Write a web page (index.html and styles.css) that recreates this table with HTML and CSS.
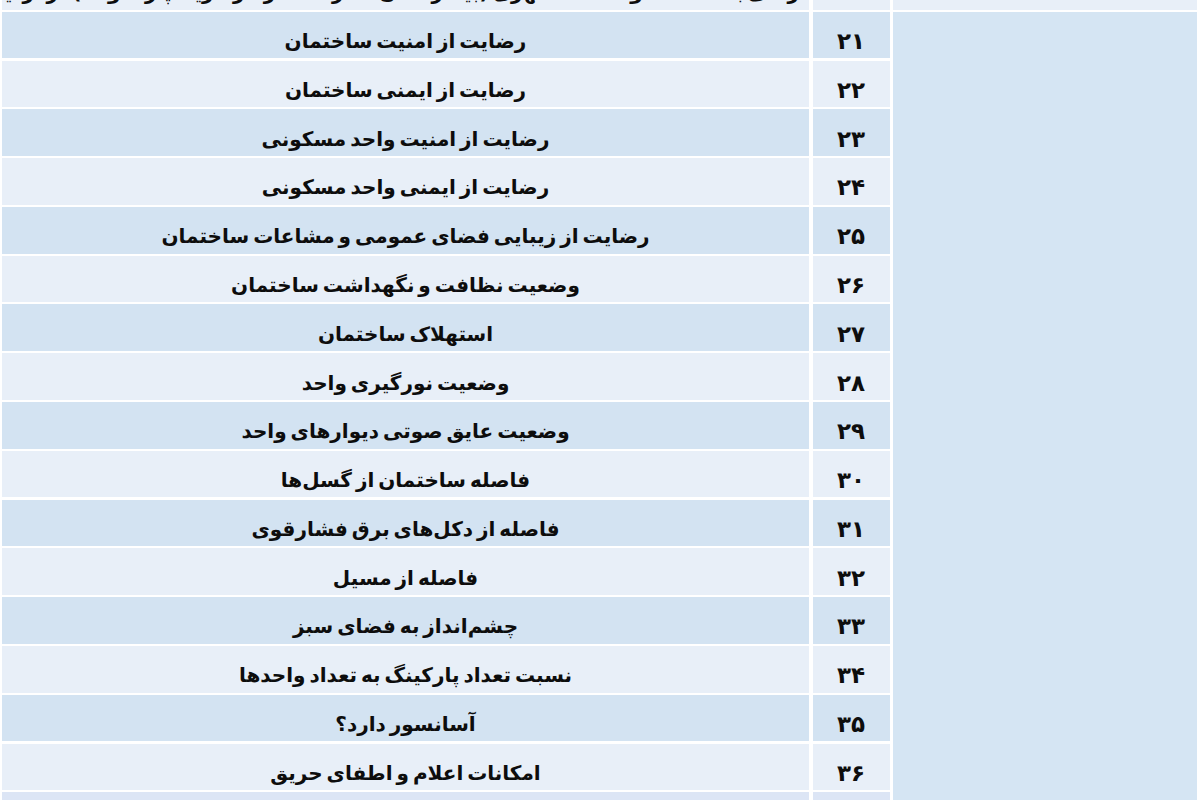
FILE: index.html
```html
<!DOCTYPE html>
<html lang="fa" dir="rtl">
<head>
<meta charset="utf-8">
<title>جدول</title>
<link rel="stylesheet" href="styles.css">
</head>
<body>
<div class="sheet">
  <div class="cell group-top row-light"></div>
  <div class="cell num row-light">۲۰</div>
  <div class="cell txt row-light">دسترسی به امکانات و خدمات شهری (بیمارستان، مدرسه، مراکز خرید، پارک و ...) در نزدیکی</div>

  <div class="cell group"></div>

  <div class="cell num row-dark">۲۱</div>
  <div class="cell txt row-dark">رضایت از امنیت ساختمان</div>
  <div class="cell num row-light">۲۲</div>
  <div class="cell txt row-light">رضایت از ایمنی ساختمان</div>
  <div class="cell num row-dark">۲۳</div>
  <div class="cell txt row-dark">رضایت از امنیت واحد مسکونی</div>
  <div class="cell num row-light">۲۴</div>
  <div class="cell txt row-light">رضایت از ایمنی واحد مسکونی</div>
  <div class="cell num row-dark">۲۵</div>
  <div class="cell txt row-dark">رضایت از زیبایی فضای عمومی و مشاعات ساختمان</div>
  <div class="cell num row-light">۲۶</div>
  <div class="cell txt row-light">وضعیت نظافت و نگهداشت ساختمان</div>
  <div class="cell num row-dark">۲۷</div>
  <div class="cell txt row-dark">استهلاک ساختمان</div>
  <div class="cell num row-light">۲۸</div>
  <div class="cell txt row-light">وضعیت نورگیری واحد</div>
  <div class="cell num row-dark">۲۹</div>
  <div class="cell txt row-dark">وضعیت عایق صوتی دیوارهای واحد</div>
  <div class="cell num row-light">۳۰</div>
  <div class="cell txt row-light">فاصله ساختمان از گسل‌ها</div>
  <div class="cell num row-dark">۳۱</div>
  <div class="cell txt row-dark">فاصله از دکل‌های برق فشارقوی</div>
  <div class="cell num row-light">۳۲</div>
  <div class="cell txt row-light">فاصله از مسیل</div>
  <div class="cell num row-dark">۳۳</div>
  <div class="cell txt row-dark">چشم‌انداز به فضای سبز</div>
  <div class="cell num row-light">۳۴</div>
  <div class="cell txt row-light">نسبت تعداد پارکینگ به تعداد واحدها</div>
  <div class="cell num row-dark">۳۵</div>
  <div class="cell txt row-dark">آسانسور دارد؟</div>
  <div class="cell num row-light">۳۶</div>
  <div class="cell txt row-light">امکانات اعلام و اطفای حریق</div>
  <div class="cell num row-last">۳۷</div>
  <div class="cell txt row-last">دسترسی به پارکینگ</div>
</div>
</body>
</html>
```

FILE: styles.css
```css
html, body {
  margin: 0;
  padding: 0;
  background: #ffffff;
  overflow: hidden;
}

body {
  width: 1200px;
  height: 800px;
  font-family: "DejaVu Sans", sans-serif;
  color: #0d0d0d;
}

.sheet {
  display: grid;
  direction: rtl;
  grid-template-columns: 304px 77px 1fr;
  grid-auto-rows: 46.6px;
  column-gap: 3.5px;
  row-gap: 2.2px;
  padding: 0 3px 0 2px;
  margin-top: -37px;
}

.cell {
  display: flex;
  align-items: center;
  justify-content: center;
  font-weight: bold;
  white-space: nowrap;
  overflow: hidden;
  padding-top: 12px;
  box-sizing: border-box;
}

.txt {
  font-size: 20px;
  word-spacing: -3px;
}

.num {
  font-size: 23px;
}

.group-top {
  background: #d5e5f3;
}

.group {
  grid-column: 1;
  grid-row: 2 / span 17;
  background: #d5e5f3;
}

.row-dark {
  background: #d3e3f2;
}

.row-light {
  background: #e8eff8;
}

.row-last {
  background: #dce5f5;
}
```
